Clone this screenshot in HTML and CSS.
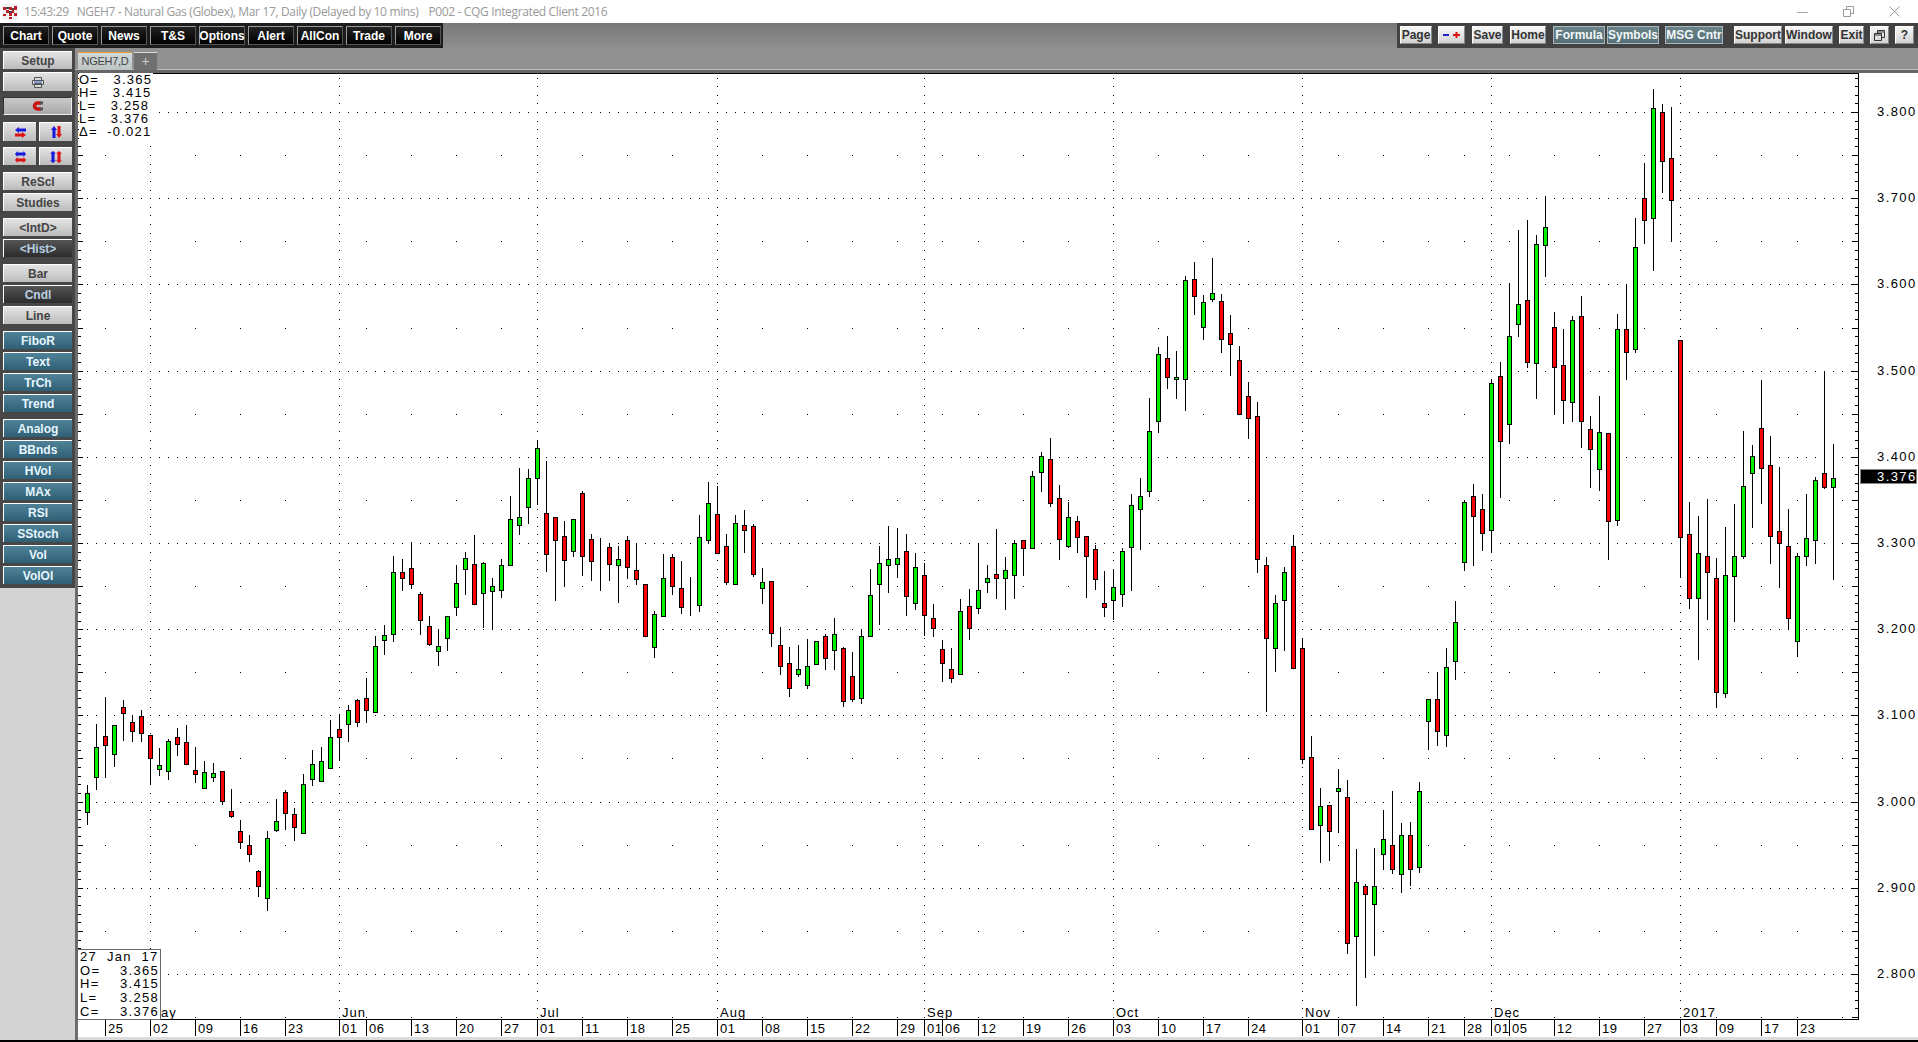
FILE: index.html
```html
<!DOCTYPE html>
<html lang="en">
<head>
  <meta charset="UTF-8">
  <title>NGEH7 - CQG Integrated Client 2016</title>
  <link rel="stylesheet" href="styles.css">
</head>
<body>
  <div class="titlebar">
    <svg class="app-logo" width="16" height="16" viewBox="0 0 16 16">
      <rect width="16" height="16" fill="#f2f2f2"/>
      <path fill="#c0202c" d="M1 3h3v3H1zM7 3h3v3H7zM12 2h3v4h-3zM4 6h3v3H4zM10 6h2v3h-2zM1 10h3v2H1zM7 9h3v3H7zM12 9h3v3h-3zM7 13h3v2H7z"/>
      <path fill="#444" d="M4 3h3v2H4zM10 4h2v2h-2zM7 7h3v2H7z"/>
    </svg>
    <span class="title-time">15:43:29</span>
    <span class="title-name">NGEH7 - Natural Gas (Globex), Mar 17, Daily (Delayed by 10 mins)</span>
    <span class="title-page">P002 - CQG Integrated Client 2016</span>
    <div class="win-controls">
      <svg width="11" height="12" viewBox="0 0 11 12"><path d="M0 6.500h11" stroke="#aaa" fill="none"/></svg>
      <svg width="11" height="12" viewBox="0 0 11 12"><path d="M.5 3.500h7v7h-7zM3.500 3V.5h7v7H8" stroke="#999" fill="none"/></svg>
      <svg width="11" height="12" viewBox="0 0 11 12"><path d="M.5.5l10 10M10.500.5l-10 10" stroke="#999" fill="none"/></svg>
    </div>
  </div>

  <div class="topbar">
    <div class="menu">
      <a class="menu-btn">Chart</a>
      <a class="menu-btn">Quote</a>
      <a class="menu-btn">News</a>
      <a class="menu-btn">T&amp;S</a>
      <a class="menu-btn">Options</a>
      <a class="menu-btn">Alert</a>
      <a class="menu-btn">AllCon</a>
      <a class="menu-btn">Trade</a>
      <a class="menu-btn">More</a>
    </div>
    <div class="tools">
      <a class="tool tool-page">Page</a>
      <a class="tool tool-zoom"><svg width="20" height="8" viewBox="0 0 20 8"><path d="M1 4h6" stroke="#2222cc" stroke-width="2"/><path d="M11 4h7M14.500 1v6" stroke="#dd1111" stroke-width="2"/></svg></a>
      <a class="tool tool-save">Save</a>
      <a class="tool tool-home">Home</a>
      <a class="tool tool-slate tool-formula">Formula</a>
      <a class="tool tool-slate tool-symbols">Symbols</a>
      <a class="tool tool-slate tool-msg">MSG Cntr</a>
      <a class="tool tool-support">Support</a>
      <a class="tool tool-window">Window</a>
      <a class="tool tool-exit">Exit</a>
      <a class="tool tool-small"><svg width="11" height="11" viewBox="0 0 11 11"><path d="M.5 3.500h7v7h-7zM.5 5h7M3.500 3V.5h7v7H8M3.500 2h7" stroke="#333" fill="none"/></svg></a>
      <a class="tool tool-small">?</a>
    </div>
  </div>

  <div class="workspace">
    <aside class="sidebar">
      <div class="side-panel">
        <div class="group">
          <a class="side-btn">Setup</a>
          <a class="side-btn side-tall">
            <svg width="12" height="11" viewBox="0 0 12 11"><path d="M2.500 3.500V.5h7v3M.5 3.500h11v4h-11zM2.500 6.500h7v4h-7z" fill="#d8d8d8" stroke="#555"/><path d="M2 5h8" stroke="#3b6fd0"/></svg>
          </a>
        </div>
        <div class="group group-6">
          <a class="side-btn side-pressed">
            <svg width="11" height="10" viewBox="0 0 11 10"><path d="M9 2H5.500a3 3 0 0 0 0 6H9" fill="none" stroke="#c81414" stroke-width="3.500"/><path d="M8 .5h3v3H8zM8 6.500h3v3H8z" fill="#555"/></svg>
          </a>
        </div>
        <div class="group group-7 pair">
          <a class="side-btn side-tall">
            <svg width="11" height="11" viewBox="0 0 11 11"><path d="M0 3l4-3v1.500h7v3H4V6z" fill="#1818dd"/><path d="M11 8L7 5v1.500H0v3h7V11z" fill="#dd1111"/></svg>
          </a>
          <a class="side-btn side-tall">
            <svg width="11" height="12" viewBox="0 0 11 12"><path d="M3 0L0 4h1.500v8h3V4H6z" fill="#1818dd"/><path d="M8 12l3-4H9.500V0h-3v8H5z" fill="#dd1111"/></svg>
          </a>
        </div>
        <div class="group group-6 pair">
          <a class="side-btn">
            <svg width="11" height="12" viewBox="0 0 11 12"><path d="M0 3l2.500-3v1.500h6V0L11 3 8.500 6V4.500h-6V6z" fill="#1818dd"/><path d="M0 9l2.500-3v1.500h6V6L11 9l-2.500 3v-1.500h-6V12z" fill="#dd1111"/></svg>
          </a>
          <a class="side-btn">
            <svg width="12" height="12" viewBox="0 0 12 12"><path d="M3 0L0 2.500h1.500v7H0L3 12l3-2.500H4.500v-7H6z" fill="#1818dd"/><path d="M9 0L6 2.500h1.500v7H6L9 12l3-2.500h-1.500v-7H12z" fill="#dd1111"/></svg>
          </a>
        </div>
        <div class="group group-7">
          <a class="side-btn">ReScl</a>
          <a class="side-btn">Studies</a>
        </div>
        <div class="group group-7">
          <a class="side-btn">&lt;IntD&gt;</a>
          <a class="side-btn side-dark">&lt;Hist&gt;</a>
        </div>
        <div class="group group-7">
          <a class="side-btn">Bar</a>
          <a class="side-btn side-dark">Cndl</a>
          <a class="side-btn">Line</a>
        </div>
        <div class="group group-7">
          <a class="side-btn side-teal">FiboR</a>
          <a class="side-btn side-teal">Text</a>
          <a class="side-btn side-teal">TrCh</a>
          <a class="side-btn side-teal">Trend</a>
        </div>
        <div class="group group-7">
          <a class="side-btn side-teal">Analog</a>
          <a class="side-btn side-teal">BBnds</a>
          <a class="side-btn side-teal">HVol</a>
          <a class="side-btn side-teal">MAx</a>
          <a class="side-btn side-teal">RSI</a>
          <a class="side-btn side-teal">SStoch</a>
          <a class="side-btn side-teal">Vol</a>
          <a class="side-btn side-teal">VolOI</a>
        </div>
      </div>
    </aside>

    <main class="main">
      <div class="tabs">
        <div class="tab">NGEH7,D</div>
        <div class="tab tab-add">+</div>
      </div>
      <div class="chart">
        <svg id="plot" class="plot" width="1840" height="967" viewBox="78 73 1840 967"></svg>
        <div class="quote-top">
          <div>O=&nbsp; &nbsp;3.365</div>
          <div>H=&nbsp; &nbsp;3.415</div>
          <div>L=&nbsp; &nbsp;3.258</div>
          <div>L=&nbsp; &nbsp;3.376</div>
          <div>&Delta;=&nbsp; -0.021</div>
        </div>
        <div class="quote-box">
          <div class="quote-date">27 &nbsp;Jan &nbsp;17</div>
          <div class="quote-row"><span>O=</span><span>3.365</span></div>
          <div class="quote-row"><span>H=</span><span>3.415</span></div>
          <div class="quote-row"><span>L=</span><span>3.258</span></div>
          <div class="quote-row"><span>C=</span><span>3.376</span></div>
        </div>
      </div>
    </main>
  </div>
  <div class="bottom-line"></div>
  <script src="chart.js"></script>
</body>
</html>
```

FILE: styles.css
```css
* {
  box-sizing: border-box;
}
html, body {
  margin: 0;
  padding: 0;
  height: 100%;
  overflow: hidden;
}
body {
  display: flex;
  flex-direction: column;
  font-family: "Liberation Sans", Arial, sans-serif;
  background: #fff;
}

/* title bar */
.titlebar {
  height: 23px;
  flex: none;
  display: flex;
  align-items: center;
  padding-left: 2px;
  background: #fff;
  color: #999;
  font-family: "Open Sans", sans-serif;
  font-size: 12px;
  letter-spacing: -0.35px;
}
.app-logo {
  flex: none;
}
.title-time {
  margin-left: 6px;
}
.title-name {
  margin-left: 8px;
}
.title-page {
  margin-left: 10px;
}
.win-controls {
  margin-left: auto;
  display: flex;
  align-items: center;
  gap: 35px;
  padding-right: 18px;
}

/* top toolbar */
.topbar {
  height: 25px;
  flex: none;
  display: flex;
  background: linear-gradient(#777, #8f8f8f);
}
.menu {
  display: flex;
  gap: 3px;
  width: 443px;
  padding: 3px 0 3px 3px;
  background: #1c1c1c;
}
.menu-btn {
  width: 46px;
  display: flex;
  align-items: center;
  justify-content: center;
  color: #fff;
  font-size: 12px;
  font-weight: bold;
  background: linear-gradient(#222, #000);
  border: 1px solid #555;
  border-top-color: #999;
  border-left-color: #999;
}
.tools {
  margin-left: auto;
  width: 521px;
  display: flex;
  gap: 7px;
  padding: 3px 0 4px 3px;
  background: #424242;
}
.tool {
  display: flex;
  align-items: center;
  justify-content: center;
  color: #333;
  font-size: 12px;
  font-weight: bold;
  background: linear-gradient(#f6f6f6, #d2d2d2);
  border: 1px solid #888;
  border-top-color: #fff;
  border-left-color: #fff;
}
.tool-slate {
  color: #f2f8fa;
  background: linear-gradient(#6a8389, #566f76);
  border-color: #a8b8bc;
}
.tool-page { width: 32px; }
.tool-zoom { width: 27px; margin-left: -1px; }
.tool-save { width: 31px; }
.tool-home { width: 36px; }
.tool-formula { width: 52px; }
.tool-symbols { width: 52px; margin-left: -5px; }
.tool-msg { width: 58px; margin-left: -1px; }
.tool-support { width: 48px; margin-left: 4px; }
.tool-window { width: 48px; margin-left: -4px; }
.tool-exit { width: 25px; margin-left: -1px; }
.tool-small { width: 19px; margin-left: -1px; }

/* left button column */
.workspace {
  flex: 1;
  min-height: 0;
  display: flex;
}
.sidebar {
  width: 75px;
  flex: none;
  background: #d3d3d3;
}
.side-panel {
  padding: 3px 3px 4px;
  background: #474747;
}
.group {
  display: flex;
  flex-direction: column;
  gap: 3px;
}
.group-6 {
  margin-top: 6px;
}
.group-7 {
  margin-top: 7px;
}
.pair {
  flex-direction: row;
  gap: 3px;
}
.pair .side-btn {
  flex: 1;
}
.side-btn {
  height: 18px;
  display: flex;
  align-items: center;
  justify-content: center;
  color: #444;
  font-size: 12px;
  font-weight: bold;
  background: linear-gradient(#e4e4e4, #bcbcbc);
  border-top: 1px solid #fff;
  border-left: 1px solid #fff;
}
.side-tall {
  height: 19px;
}
.side-pressed {
  background: linear-gradient(#c8c8c8, #aaa);
  border-color: #333;
  border-right: 1px solid #eee;
  border-bottom: 1px solid #eee;
}
.side-dark {
  color: #b9cfe2;
  background: linear-gradient(#555, #2c2c2c);
}
.side-teal {
  color: #e6f6ff;
  background: linear-gradient(#4f8298, #2f5f75);
}

/* tabs above the chart */
.main {
  flex: 1;
  min-width: 0;
  display: flex;
  flex-direction: column;
}
.tabs {
  height: 25px;
  flex: none;
  display: flex;
  gap: 2px;
  padding: 4px 0 3px 3px;
  background: #909090;
  border-bottom: 3px solid #666;
  box-shadow: inset 0 -1px 0 #bbb;
}
.tab {
  width: 54px;
  height: 18px;
  padding-bottom: 2px;
  display: flex;
  align-items: center;
  justify-content: center;
  color: #444;
  font-size: 11px;
  letter-spacing: -0.3px;
  background: linear-gradient(#d2d8d8, #bcc4c4);
  border-top: 1px solid #e8a33d;
}
.tab-add {
  width: 23px;
  color: #ccc;
  font-size: 14px;
  background: #707070;
  border-top-color: #ddd;
}

/* chart */
.chart {
  position: relative;
  flex: 1;
  min-height: 0;
  display: flex;
  border-left: 3px solid #6c6c6c;
}
.plot {
  display: block;
  flex: none;
  font-family: "Liberation Sans", Arial, sans-serif;
  font-size: 13px;
}
.plot .crisp {
  shape-rendering: crispEdges;
}
.plot .price {
  letter-spacing: 1.4px;
}
.plot .price-now {
  letter-spacing: 1.4px;
  fill: #fff;
}
.plot .date {
  letter-spacing: 0.4px;
}
.plot .month {
  letter-spacing: 1px;
}
.quote-top {
  position: absolute;
  left: 1px;
  top: 0;
  width: 74px;
  height: 66px;
  background: #fff;
  font-size: 13px;
  line-height: 13px;
  letter-spacing: 1.2px;
  white-space: nowrap;
}
.quote-box {
  position: absolute;
  left: -1px;
  top: 876px;
  width: 84px;
  height: 71px;
  padding: 0 1px 0 2px;
  background: #fff;
  border: 1px solid #666;
  font-size: 13px;
  line-height: 13.700px;
  letter-spacing: 1.3px;
  white-space: nowrap;
}
.quote-row {
  display: flex;
  justify-content: space-between;
}

.bottom-line {
  height: 2px;
  flex: none;
  background: #000;
}
```

FILE: chart.js
```js
// y values are pixels as read off the screen; each block has its own origin and scale
const blocks = [
  { y0: 660, sy: 3, rows: `
375 400 455 495 G
192 262 350 390 G
111 229 254 353 R
196 196 281 320 G
120 142 158 243 R
168 187 212 246 R
150 169 218 246 R
226 226 293 372 R
264 316 326 347 G
238 244 332 360 G
204 232 251 288 R
195 247 311 311 R
262 331 341 368 R
303 337 383 383 G
309 340 350 365 G
334 334 422 434 R
388 454 467 473 R
481 514 545 566 R
526 556 581 605 R
631 634 677 710 R
514 535 713 752 G
418 484 509 516 G
391 397 458 509 R
445 463 500 542 R
343 373 518 518 G
270 313 356 377 G
262 304 362 365 G
180 232 323 323 G
163 208 230 302 R
136 151 193 246 G
118 121 185 200 R
55 115 151 188 R` },
  { y0: 0, sy: 1, rows: `
636 646 712 712 G
625 635 640 655 G
556 572 634 642 G` },
  { y0: 430, sy: 3, rows: `
388 427 445 482 R
337 415 461 476 R
487 493 571 614 R
559 589 643 647 R
598 649 664 707 G
559 559 625 662 G
405 460 532 557 G
367 385 418 494 G
316 403 523 523 R
397 400 490 593 G
445 469 484 599 G
388 406 481 503 G
198 268 406 406 G
114 262 286 314 G
118 145 232 281 G
30 55 145 224 G
94 250 373 425 R
262 262 331 512 R
274 319 391 470 R
268 268 364 380 G
184 190 379 437 R
313 328 394 452 R
324 397 397 482 R
340 352 403 452 R
349 388 406 518 G
319 331 412 446 R
340 421 448 464 R
463 463 619 619 R
544 553 652 683 G
373 445 559 559 G
373 382 469 494 R
394 475 532 551 R
442 532 532 557 R
255 322 526 545 G
156 220 331 341 G
168 253 370 373 R
313 349 457 464 R
256 280 463 463 G
241 286 301 368 R
283 289 433 440 R
415 457 475 521 G
454 454 610 650 R
592 646 709 734 R
652 700 775 800 R
646 718 733 740 G
628 709 766 776 G
634 634 703 703 G` },
  { y0: 250, sy: 3, rows: `
1153 1159 1225 1259 R
1105 1153 1201 1259 G
1190 1195 1354 1370 R
1207 1279 1348 1355 R
1138 1159 1345 1361 G
958 1036 1159 1159 G
889 940 1003 1124 G
829 928 946 1028 G
835 925 943 984 G
853 904 1039 1097 R
910 952 1060 1079 G
940 976 1096 1157 R
1063 1105 1135 1160 R
1171 1198 1240 1295 R
1195 1258 1285 1298 R
1048 1084 1273 1273 G
1018 1069 1135 1169 R
880 1021 1075 1091 G
946 985 997 1028 G
838 973 985 1046 R
922 961 985 1079 G
871 880 976 1046 G
871 871 895 977 R
664 679 895 895 G
607 619 667 725 G
565 628 760 770 R
706 745 868 929 R
757 802 889 893 G
799 814 862 908 R
859 859 919 1043 R
886 898 988 1019 R
964 1060 1070 1100 R
958 1012 1051 1111 G
895 904 1033 1070 G
733 766 892 1022 G
685 739 778 899 G
445 544 724 740 G
292 313 514 548 G
259 325 382 416 R
304 382 388 446 G
79 91 388 482 G
37 88 139 194 R
136 157 232 269 G
25 130 148 155 G
133 154 268 308 R
196 250 283 377 R
289 331 493 493 R` },
  { y0: 0, sy: 1, rows: `
382 396 418 439 R` },
  { y0: 400, sy: 2.529, rows: `
5 41 403 437 R
398 418 603 788 R
494 514 626 689 G
422 436 507 634 G
341 370 677 677 R
603 626 908 920 R
851 904 1085 1085 R
982 1028 1076 1172 G
1023 1023 1091 1165 R
932 980 990 1094 G
960 1005 1372 1400 R
1136 1220 1355 1532 G
1225 1230 1250 1463 R
1133 1230 1274 1405 G
1037 1109 1149 1188 G
990 1126 1187 1198 R
1071 1101 1200 1246 G
1066 1101 1185 1228 R
965 990 1182 1195 G
755 755 813 884 G
689 755 838 874 R
626 674 846 878 G` },
  { y0: 80, sy: 2.45, rows: `
1277 1329 1424 1470 G
1030 1035 1180 1202 G
990 1020 1067 1190 R
1015 1052 1109 1155 R
733 743 1103 1158 G
692 724 885 1023 R
498 628 844 893 G
368 550 597 629 G
342 540 690 705 R
380 403 694 781 G
283 359 405 482 G
569 606 704 818 R
611 699 783 842 R
578 587 790 839 G
528 577 836 901 R
822 854 905 999 R
775 863 952 1008 G
866 866 1081 1175 R
574 609 1079 1092 G
501 609 667 734 R
337 408 660 668 G
204 290 342 401 R
21 68 339 469 G
60 79 199 278 R
67 190 293 398 R
636 636 1120 1218 R
1035 1113 1268 1297 R
1067 1160 1270 1422 G
1027 1165 1206 1324 R
1172 1221 1500 1538 R
1096 1212 1503 1513 G
1040 1165 1216 1327 G
861 994 1165 1173 G
895 922 963 1097 G
736 852 951 1038 R
871 944 1118 1187 R
947 1104 1135 1244 R
1052 1141 1319 1346 R
1158 1167 1375 1413 G
1015 1121 1167 1190 G
973 981 1127 1187 G
714 964 998 1003 R
893 974 998 1224 G` }
];

const candles = [];
blocks.forEach(function (b) {
  b.rows.trim().split("\n").forEach(function (row) {
    const p = row.split(" ");
    const y = function (v) { return Math.round(b.y0 + Number(v) / b.sy); };
    candles.push({ high: y(p[0]), top: y(p[1]), bottom: y(p[2]), low: y(p[3]), color: p[4] });
  });
});

// date ticks: [bar index, label]
const ticks = [
  [2, "25"], [7, "02"], [12, "09"], [17, "16"], [22, "23"],
  [28, "01"], [31, "06"], [36, "13"], [41, "20"], [46, "27"],
  [50, "01"], [55, "11"], [60, "18"], [65, "25"],
  [70, "01"], [75, "08"], [80, "15"], [85, "22"], [90, "29"],
  [93, "01"], [95, "06"], [99, "12"], [104, "19"], [109, "26"],
  [114, "03"], [119, "10"], [124, "17"], [129, "24"],
  [135, "01"], [139, "07"], [144, "14"], [149, "21"], [153, "28"],
  [156, "01"], [158, "05"], [163, "12"], [168, "19"], [173, "27"],
  [177, "03"], [181, "09"], [186, "17"], [190, "23"]
];
// May's first letter is hidden by the quote box
const months = [[7, "ay"], [28, "Jun"], [50, "Jul"], [70, "Aug"], [93, "Sep"], [114, "Oct"], [135, "Nov"], [156, "Dec"], [177, "2017"]];

const barX = function (i) { return 87 + i * 9; };
const priceY = function (n) { return 112 + (380 - n) * 8.62; };
const AXIS_X = 1858;
const BOTTOM_Y = 1019;

let dots = "";
let axis = "";
let labels = "";

// price grid and ticks, n is the price in cents
for (let n = 384; n >= 275; n--) {
  const y = Math.round(priceY(n)) + 0.5;
  const long = n % 5 === 0;
  axis += `M78 ${y}h${long ? 5 : 3}M${AXIS_X} ${y}h-${long ? 6 : 3}`;
  if (n % 10 === 0) {
    for (let i = 0; i <= 196; i++) dots += `<rect x="${barX(i)}" y="${y - 0.5}" width="1" height="1"/>`;
    labels += `<text class="price" x="1877" y="${y + 3}">${(n / 100).toFixed(3)}</text>`;
  } else if (n % 5 === 0) {
    ticks.forEach(function (t) { dots += `<rect x="${barX(t[0])}" y="${y - 0.5}" width="1" height="1"/>`; });
    dots += `<rect x="${barX(195)}" y="${y - 0.5}" width="1" height="1"/>`;
  }
  months.forEach(function (m) { dots += `<rect x="${barX(m[0])}" y="${y - 0.5}" width="1" height="1"/>`; });
}

// date ticks
ticks.forEach(function (t) {
  const x = barX(t[0]);
  axis += `M${x + 0.5} ${BOTTOM_Y}V1036`;
  dots += `<rect x="${x}" y="1017" width="1" height="1"/>`;
  labels += `<text class="date" x="${x + 3}" y="1033">${t[1]}</text>`;
});
months.forEach(function (m) {
  labels += `<text class="month" x="${m[0] === 7 ? 161 : barX(m[0]) + 3}" y="1017">${m[1]}</text>`;
});

// candles
let wicks = "";
let bodies = "";
candles.forEach(function (c, i) {
  const x = barX(i);
  wicks += `M${x + 0.5} ${c.high}V${c.low}`;
  const fill = c.color === "G" ? "#00f000" : "#ff0000";
  bodies += `<rect x="${x - 1.5}" y="${c.top + 0.5}" width="4" height="${Math.max(c.bottom - c.top, 0)}" fill="${fill}" stroke="#000"/>`;
});

document.getElementById("plot").innerHTML =
  `<rect x="78" y="1037" width="1840" height="3" fill="#dcdcdc"/>` +
  `<g class="crisp" fill="#000">${dots}</g>` +
  `<path class="crisp" d="${axis}" stroke="#000" fill="none"/>` +
  `<path class="crisp" d="M78 73.500H${AXIS_X + 0.5}V${BOTTOM_Y + 0.5}H78" stroke="#000" fill="none"/>` +
  `<path class="crisp" d="${wicks}" stroke="#000" fill="none"/>` +
  `<g class="crisp">${bodies}</g>` +
  labels +
  `<rect class="crisp" x="1860.500" y="469.500" width="56" height="14" fill="#000" stroke="#888"/>` +
  `<text class="price-now" x="1877" y="481">3.376</text>`;
```
